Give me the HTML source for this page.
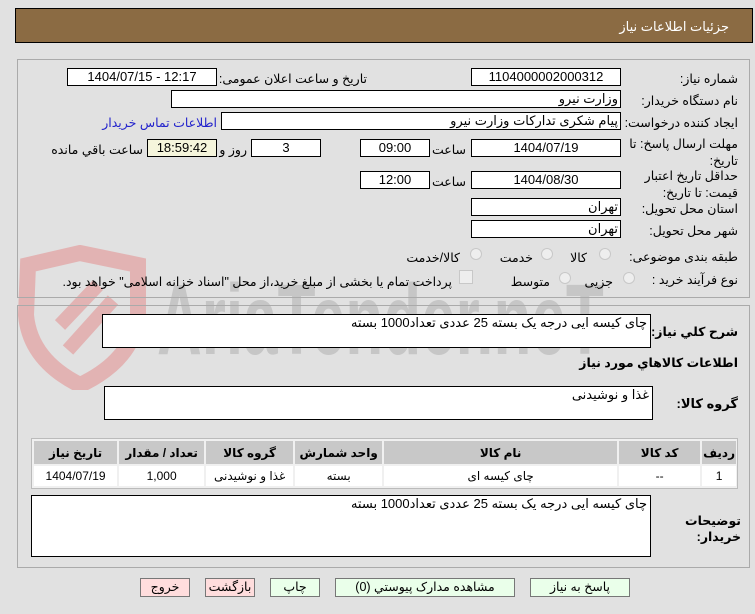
<!DOCTYPE html>
<html><head><meta charset="utf-8"><style>
body{margin:0;width:755px;height:614px;background:#e1e1e1;font-family:"Liberation Sans","DejaVu Sans",sans-serif;font-size:12px;color:#000;position:relative;overflow:hidden}
.a{position:absolute}
.box{position:absolute;background:#fff;border:1px solid #000;box-sizing:border-box;height:18px;line-height:16px;text-align:center;font-size:13px}
.lbl{position:absolute;direction:rtl;text-align:right;font-size:12.5px;white-space:nowrap}
.rad{position:absolute;width:12px;height:12px;border-radius:50%;border:1px solid #c8c8c8;background:#eee;box-sizing:border-box}
.btn{position:absolute;height:19px;border:1px solid #777;box-sizing:border-box;text-align:center;line-height:17px;font-size:12.5px;background:#eaffea}
table{border-collapse:separate;border-spacing:2px}
td{text-align:center;font-size:12px}
</style></head><body>
<div class="a" style="left:15px;top:8px;width:738px;height:35px;background:#8b6b43;border:1px solid #000;box-sizing:border-box"></div>
<div class="lbl" style="right:26px;top:19px;color:#fff;font-size:13px">جزئیات اطلاعات نیاز</div>

<!-- watermark -->
<svg class="a" style="left:18px;top:245px" width="130" height="145"><path d="M10 20 L62 8 L120 20 L120 70 Q115 115 62 140 Q12 115 8 70 Z" fill="none" stroke="#e2b3b3" stroke-width="16"/><path d="M50 105 L95 55 M42 80 L80 40" stroke="#e2b3b3" stroke-width="14"/></svg>
<div class="a" style="left:157px;top:270px;height:100px;line-height:100px;font-size:100px;font-weight:bold;color:#c6c6c6;font-family:'Liberation Sans Narrow','Liberation Sans',sans-serif;white-space:nowrap;transform-origin:0 0;transform:scaleX(0.62)">AriaTender.neT</div>

<div class="a" style="left:17px;top:59px;width:733px;height:239px;border:1px solid #aaa;box-sizing:border-box"></div>
<div class="a" style="left:17px;top:305px;width:733px;height:263px;border:1px solid #aaa;box-sizing:border-box"></div>

<div class="lbl" style="right:17px;top:71px">شماره نیاز:</div>
<div class="box" style="left:471px;top:68px;width:150px">1104000002000312</div>
<div class="lbl" style="right:388px;top:71px">تاریخ و ساعت اعلان عمومی:</div>
<div class="box" style="left:67px;top:68px;width:150px">1404/07/15 - 12:17</div>

<div class="lbl" style="right:17px;top:93px">نام دستگاه خریدار:</div>
<div class="box" style="left:171px;top:90px;width:450px;text-align:right;padding-right:2px">وزارت نیرو</div>

<div class="lbl" style="right:17px;top:115px">ایجاد کننده درخواست:</div>
<div class="box" style="left:221px;top:112px;width:400px;text-align:right;padding-right:2px">پیام شکری تدارکات وزارت نیرو</div>
<div class="lbl" style="right:538px;top:115px;color:#22c">اطلاعات تماس خریدار</div>

<div class="lbl" style="right:17px;top:136px;line-height:17px">مهلت ارسال پاسخ: تا<br>تاریخ:</div>
<div class="box" style="left:471px;top:139px;width:150px">1404/07/19</div>
<div class="lbl" style="right:289px;top:142px">ساعت</div>
<div class="box" style="left:360px;top:139px;width:70px">09:00</div>
<div class="box" style="left:251px;top:139px;width:70px">3</div>
<div class="lbl" style="right:508px;top:142px">روز و</div>
<div class="box" style="left:147px;top:139px;width:70px;background:#f5f5dc">18:59:42</div>
<div class="lbl" style="right:612px;top:142px">ساعت باقي مانده</div>

<div class="lbl" style="right:17px;top:168px;line-height:17px">حداقل تاریخ اعتبار<br>قیمت: تا تاریخ:</div>
<div class="box" style="left:471px;top:171px;width:150px">1404/08/30</div>
<div class="lbl" style="right:289px;top:174px">ساعت</div>
<div class="box" style="left:360px;top:171px;width:70px">12:00</div>

<div class="lbl" style="right:17px;top:201px">استان محل تحویل:</div>
<div class="box" style="left:471px;top:198px;width:150px;text-align:right;padding-right:2px">تهران</div>
<div class="lbl" style="right:17px;top:223px">شهر محل تحویل:</div>
<div class="box" style="left:471px;top:220px;width:150px;text-align:right;padding-right:2px">تهران</div>

<div class="lbl" style="right:17px;top:249px">طبقه بندی موضوعی:</div>
<div class="rad" style="left:599px;top:248px"></div><div class="lbl" style="right:168px;top:250px">کالا</div>
<div class="rad" style="left:541px;top:248px"></div><div class="lbl" style="right:222px;top:250px">خدمت</div>
<div class="rad" style="left:470px;top:248px"></div><div class="lbl" style="right:295px;top:250px">کالا/خدمت</div>

<div class="lbl" style="right:17px;top:272px">نوع فرآیند خرید :</div>
<div class="rad" style="left:623px;top:272px"></div><div class="lbl" style="right:142px;top:274px">جزیی</div>
<div class="rad" style="left:559px;top:272px"></div><div class="lbl" style="right:205px;top:274px">متوسط</div>
<div class="a" style="left:459px;top:270px;width:12px;height:12px;border:1px solid #c8c8c8;background:#eee"></div>
<div class="lbl" style="right:303px;top:274px">پرداخت تمام یا بخشی از مبلغ خرید،از محل "اسناد خزانه اسلامی" خواهد بود.</div>

<div class="lbl" style="right:17px;top:324px;font-weight:bold">شرح کلي نياز:</div>
<div class="box" style="left:102px;top:314px;width:549px;height:34px;text-align:right;padding-right:3px;line-height:16px">چای کیسه ایی درجه یک بسته 25 عددی تعداد1000 بسته</div>
<div class="lbl" style="right:17px;top:355px;font-weight:bold">اطلاعات کالاهاي مورد نياز</div>
<div class="lbl" style="right:17px;top:396px;font-weight:bold;font-size:13px">گروه کالا:</div>
<div class="box" style="left:104px;top:386px;width:549px;height:34px;text-align:right;padding-right:3px">غذا و نوشیدنی</div>

<div class="a" style="left:31px;top:438px;width:707px;height:51px;border:1px solid #bbb;box-sizing:border-box;background:#f0f0f0"></div>
<table class="a" style="left:32px;top:439px;width:706px;direction:rtl">
<tr style="background:#c8c8c8;height:23px;font-weight:bold"><td style="width:27px">رديف</td><td style="width:79px">کد کالا</td><td style="width:231px">نام کالا</td><td style="width:85px">واحد شمارش</td><td style="width:85px">گروه کالا</td><td style="width:83px">تعداد / مقدار</td><td>تاريخ نياز</td></tr>
<tr style="background:#fff;height:20px"><td>1</td><td>--</td><td>چای کیسه ای</td><td>بسته</td><td>غذا و نوشیدنی</td><td>1,000</td><td>1404/07/19</td></tr>
</table>

<div class="lbl" style="right:14px;top:513px;font-weight:bold;line-height:16px">توضيحات<br>خريدار:</div>
<div class="box" style="left:31px;top:495px;width:620px;height:62px;text-align:right;padding-right:3px">چای کیسه ایی درجه یک بسته 25 عددی تعداد1000 بسته</div>

<div class="btn" style="left:530px;top:578px;width:100px">پاسخ به نياز</div>
<div class="btn" style="left:335px;top:578px;width:180px">مشاهده مدارک پيوستي (0)</div>
<div class="btn" style="left:270px;top:578px;width:50px">چاپ</div>
<div class="btn" style="left:205px;top:578px;width:50px;background:#fdd">بازگشت</div>
<div class="btn" style="left:140px;top:578px;width:50px;background:#fdd">خروج</div>
</body></html>
